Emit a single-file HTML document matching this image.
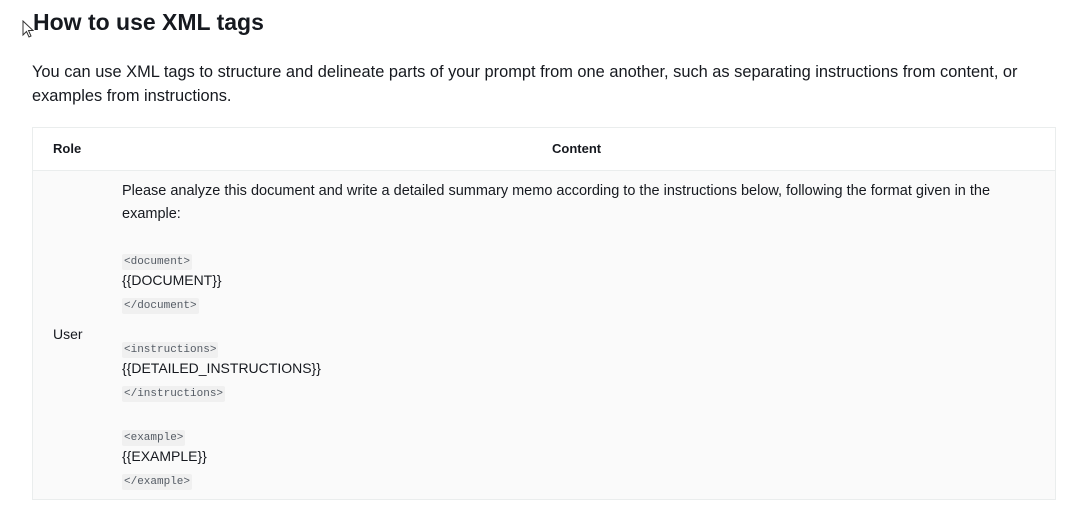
<!DOCTYPE html>
<html><head><style>
body{margin:0;width:1091px;height:523px;background:#fff;font-family:"Liberation Sans",sans-serif;color:#16191f;position:relative;overflow:hidden}
.a{position:absolute;white-space:nowrap}
h1{position:absolute;left:33px;top:9px;margin:0;font-size:23px;font-weight:bold;color:#16191f}
.p{font-size:16.4px;color:#16191f;line-height:22px}
.t{position:absolute;left:32px;top:127px;width:1022px;height:371px;border:1px solid #eaeded;background:#fafafa}
.hd{position:absolute;left:0;top:0;width:1022px;height:42px;background:#fff;border-bottom:1px solid #eaeded}
.b{font-size:13px;font-weight:bold}
.s{font-size:14.5px;color:#16191f}
code{font-family:"Liberation Mono",monospace;font-size:11px;background:#f0f0f0;color:#545b64;padding:2px 2px;border-radius:2px}
</style></head><body>
<svg class="a" style="left:22px;top:20px" width="12" height="18" viewBox="0 0 12 18"><path d="M1 1 L1 15 L4.5 11.5 L7 17 L9 16 L6.5 10.5 L11 10.5 Z" fill="#fff" stroke="#333" stroke-width="1"/></svg>
<h1>How to use XML tags</h1>
<div class="a p" style="left:32px;top:61px">You can use XML tags to structure and delineate parts of your prompt from one another, such as separating instructions from content, or</div>
<div class="a p" style="left:32px;top:85px">examples from instructions.</div>
<div class="t"><div class="hd"></div></div>
<div class="a b" style="left:53px;top:141px">Role</div>
<div class="a b" style="left:552px;top:141px">Content</div>
<div class="a s" style="left:53px;top:326px;font-size:14px">User</div>
<div class="a s" style="left:122px;top:183px">Please analyze this document and write a detailed summary memo according to the instructions below, following the format given in the</div>
<div class="a s" style="left:122px;top:206px">example:</div>
<div class="a" style="left:122px;top:251px"><code>&lt;document&gt;</code></div>
<div class="a s" style="left:122px;top:272px;font-size:14px">{{DOCUMENT}}</div>
<div class="a" style="left:122px;top:295px"><code>&lt;/document&gt;</code></div>
<div class="a" style="left:122px;top:339px"><code>&lt;instructions&gt;</code></div>
<div class="a s" style="left:122px;top:360px;font-size:14px">{{DETAILED_INSTRUCTIONS}}</div>
<div class="a" style="left:122px;top:383px"><code>&lt;/instructions&gt;</code></div>
<div class="a" style="left:122px;top:427px"><code>&lt;example&gt;</code></div>
<div class="a s" style="left:122px;top:448px;font-size:14px">{{EXAMPLE}}</div>
<div class="a" style="left:122px;top:471px"><code>&lt;/example&gt;</code></div>
</body></html>
